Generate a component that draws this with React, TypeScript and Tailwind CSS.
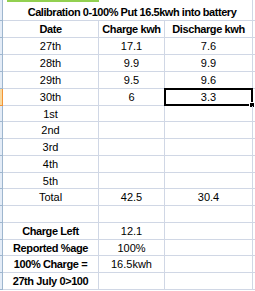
import React from "react";

type Row = { a: string; b?: string; c?: string; bold?: boolean; h: string; sel?: boolean };

const rows: Row[] = [
  { a: "Date", b: "Charge kwh", c: "Discharge kwh", bold: true, h: "h-[17px]" },
  { a: "27th", b: "17.1", c: "7.6", h: "h-[17px]" },
  { a: "28th", b: "9.9", c: "9.9", h: "h-[17px]" },
  { a: "29th", b: "9.5", c: "9.6", h: "h-[17px]" },
  { a: "30th", b: "6", c: "3.3", h: "h-[17px]", sel: true },
  { a: "1st", h: "h-[16px]" },
  { a: "2nd", h: "h-[17px]" },
  { a: "3rd", h: "h-[17px]" },
  { a: "4th", h: "h-[17px]" },
  { a: "5th", h: "h-[16px]" },
  { a: "Total", b: "42.5", c: "30.4", h: "h-[17px]" },
  { a: "", h: "h-[17px]" },
  { a: "Charge Left", b: "12.1", h: "h-[17px]" },
  { a: "Reported %age", b: "100%", h: "h-[16px]" },
  { a: "100% Charge =", b: "16.5kwh", h: "h-[17px]" },
  { a: "27th July 0>100", b: "", h: "h-[17px]" },
];

const labelBold = (r: Row, i: number) => r.bold || i >= 12;

export default function App() {
  return (
    <div
      className="w-[255px] h-[291px] overflow-hidden bg-white text-black text-[11px] leading-none"
      style={{ fontFamily: '"Liberation Sans Narrow", "Liberation Sans", Arial, sans-serif' }}
    >
      {/* title row */}
      <div className="flex h-[21px]">
        <div className="w-[3px] shrink-0 bg-[#e4ecf7] border-r border-b border-[#9eb6ce]" />
        <div className="relative w-[250px] shrink-0 flex items-end justify-center pb-[2px] pl-[9px] border-r border-b border-[#d0d7e5] font-bold tracking-[-0.45px]">
          <div className="absolute left-[4px] top-0 w-[92px] h-[2px] bg-[#92d050]" />
          Calibration 0-100% Put 16.5kwh into battery
        </div>
        <div className="flex-1 border-b border-[#d0d7e5]" />
      </div>

      {rows.map((r, i) => (
        <div key={i} className={`flex ${r.h}`}>
          <div
            className={`w-[3px] shrink-0 border-r border-b ${
              r.sel ? "bg-[#f9d99f] border-[#f29436]" : "bg-[#e4ecf7] border-[#9eb6ce]"
            }`}
          />
          <div
            className={`w-[96px] shrink-0 flex items-center justify-center pt-[1px] border-r border-b border-[#d0d7e5] ${
              labelBold(r, i) ? "font-bold tracking-[-0.4px]" : ""
            }`}
          >
            {r.a}
          </div>
          <div
            className={`w-[66px] shrink-0 flex items-center justify-center pt-[1px] border-r border-b border-[#d0d7e5] ${
              r.bold ? "font-bold tracking-[-0.4px]" : ""
            }`}
          >
            {r.b}
          </div>
          <div
            className={`relative w-[88px] shrink-0 flex items-center justify-center pt-[1px] border-r border-b border-[#d0d7e5] ${
              r.bold ? "font-bold tracking-[-0.4px]" : ""
            }`}
          >
            {r.sel && (
              <div className="absolute -left-[1px] -top-[1px] -right-[1px] -bottom-[1px] border-2 border-black">
                <div className="absolute -right-[4px] -bottom-[4px] w-[6px] h-[6px] bg-black border border-white" />
              </div>
            )}
            <span className="relative">{r.c}</span>
          </div>
          <div className="flex-1 border-b border-[#d0d7e5]" />
        </div>
      ))}
    </div>
  );
}
